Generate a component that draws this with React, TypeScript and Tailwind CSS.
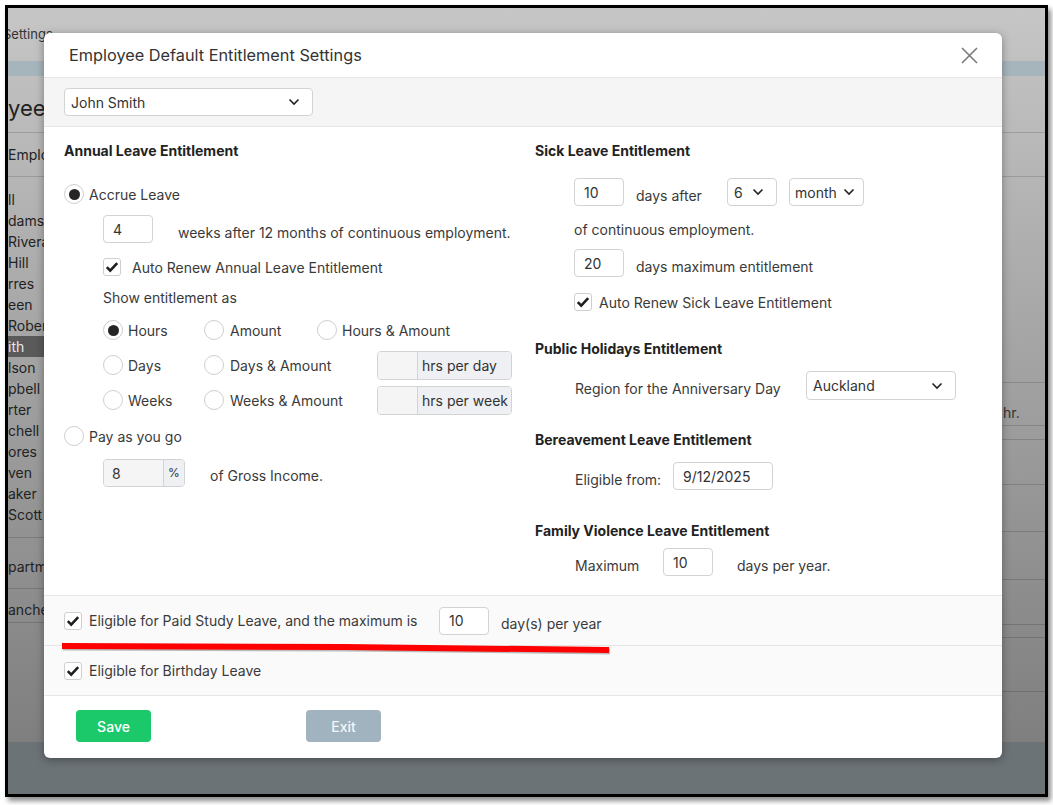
import React from 'react';

const Radio = ({ checked = false }: { checked?: boolean }) => (
  <div className="w-[20px] h-[20px] shrink-0 rounded-full border border-[#cfcfcf] bg-white flex items-center justify-center">
    {checked && <div className="w-[11px] h-[11px] rounded-full bg-[#252525]" />}
  </div>
);

const Checkbox = () => (
  <div className="w-[18px] h-[18px] shrink-0 rounded-[3px] border border-[#cfcfcf] bg-white flex items-center justify-center">
    <svg width="14" height="14" viewBox="0 0 14 14">
      <path d="M1.8 7.2l3.4 3.4 7-7.4" fill="none" stroke="#1f1f1f" strokeWidth="2.6" />
    </svg>
  </div>
);

const Chevron = () => (
  <svg width="12" height="8" viewBox="0 0 12 8" className="shrink-0">
    <path d="M1.5 1.5l4.5 4.5 4.5-4.5" fill="none" stroke="#222" strokeWidth="1.6" />
  </svg>
);

const Input = ({ value = '', w }: { value?: string; w: string }) => (
  <div className={`${w} h-[28px] shrink-0 border border-[#d3d3d3] rounded-[4px] bg-white px-[9px] flex items-center text-[#333]`}>
    {value}
  </div>
);

const Select = ({ value, w, h = 'h-[28px]' }: { value: string; w: string; h?: string }) => (
  <div className={`${w} ${h} shrink-0 border border-[#d3d3d3] rounded-[4px] bg-white pl-[6px] pr-[12px] flex items-center justify-between text-[#333]`}>
    <span>{value}</span>
    <Chevron />
  </div>
);

const Addon = ({ unit }: { unit: string }) => (
  <div className="flex h-[29px] border border-[#d3d3d3] rounded-[4px] overflow-hidden text-[#333]">
    <div className="w-[39px] bg-[#f5f5f5]" />
    <div className="w-[94px] bg-[#eef0f3] border-l border-[#d3d3d3] pl-[4px] flex items-center whitespace-nowrap">{unit}</div>
  </div>
);

const names = ['ll', 'dams', 'Rivera', 'Hill', 'rres', 'een', 'Robert', 'ith', 'lson', 'pbell', 'rter', 'chell', 'ores', 'ven', 'aker', 'Scott'];

const Backdrop = () => (
  <div className="h-full flex flex-col text-[14px] text-[#222]">
    <div className="h-[734px] flex flex-col bg-gradient-to-b from-[#c6c6c6] to-[#7f7f7f]">
      <div className="h-[53px] pt-[17px] -ml-[5px] text-[13px] text-[#333]">Settings</div>
      <div className="h-[15px] bg-[#a6b5bc]" />
      <div className="h-[57px] border-b border-black/15 flex items-center text-[22px] pt-[8px]">yee</div>
      <div className="h-[44px] border-b border-black/15 flex items-center">
        <div className="w-[36px] overflow-hidden whitespace-nowrap">Employees</div>
      </div>
      <div className="flex flex-1">
        <div className="w-[36px] flex flex-col pt-[12px] overflow-hidden">
          {names.map((n, i) => (
            <div key={i} className={`h-[21px] leading-[21px] whitespace-nowrap ${i === 7 ? 'bg-[#5a5a5a] text-[#e8e8e8]' : ''}`}>
              {n}
            </div>
          ))}
          <div className="mt-[12px] h-[52px] border-t border-b border-black/15 flex items-center whitespace-nowrap pt-[6px]">partments</div>
          <div className="h-[34px] border-b border-black/15 flex items-center whitespace-nowrap pt-[8px]">anches</div>
        </div>
        <div className="flex-1" />
        <div className="w-[43px] flex flex-col">
          <div className="h-[206px] border-b border-black/15" />
          <div className="h-[43px] border-b border-black/15 flex items-end pb-[2px] pl-[1px] text-[#333]">hr.</div>
          <div className="h-[14px] border-b border-black/15" />
          <div className="h-[45px] border-b border-black/15" />
          <div className="h-[47px] border-b border-black/15" />
          <div className="h-[48px] border-b border-black/15" />
          <div className="h-[45px] border-b border-black/15" />
          <div className="h-[13px] border-b border-black/15" />
          <div className="h-[54px] border-b border-black/15" />
        </div>
      </div>
    </div>
    <div className="flex-1 bg-[#6c7377]" />
  </div>
);

const Modal = () => (
  <div className="absolute left-[36px] top-[25px] w-[958px] h-[725px] bg-white rounded-[6px] shadow-[0_2px_8px_rgba(0,0,0,0.35)] overflow-hidden flex flex-col text-[14px] text-[#3a3a3a]">
    {/* header */}
    <div className="h-[45px] shrink-0 border-b border-[#e6e6e6] pl-[25px] pr-[24px] flex items-center justify-between">
      <span className="text-[16.3px] text-[#333]">Employee Default Entitlement Settings</span>
      <svg width="17" height="17" viewBox="0 0 17 17">
        <path d="M1 1l15 15M16 1L1 16" stroke="#7a7a7a" strokeWidth="1.6" />
      </svg>
    </div>
    <div className="h-[49px] shrink-0 bg-[#f5f5f5] border-b border-[#e6e6e6] px-[20px] flex items-center">
      <Select value="John Smith" w="w-[249px]" h="h-[28px]" />
    </div>

    {/* body */}
    <div className="h-[469px] shrink-0 border-b border-[#e6e6e6] pl-[20px] pt-[14px] flex">
      <div className="w-[471px] flex flex-col">
        <div className="h-[20px] leading-[20px] font-bold text-[#222]">Annual Leave Entitlement</div>
        <div className="mt-[23px] h-[20px] flex items-center">
          <Radio checked />
          <span className="ml-[5px]">Accrue Leave</span>
        </div>
        <div className="mt-[11px] ml-[39px] flex items-start">
          <Input value="4" w="w-[50px]" />
          <span className="ml-[25px] pt-[8px] leading-[20px]">weeks after 12 months of continuous employment.</span>
        </div>
        <div className="mt-[15px] ml-[39px] h-[18px] flex items-center">
          <Checkbox />
          <span className="ml-[11px]">Auto Renew Annual Leave Entitlement</span>
        </div>
        <div className="mt-[12px] ml-[39px] h-[20px] leading-[20px]">Show entitlement as</div>
        <div className="mt-[7px] ml-[39px] flex flex-col gap-[5px]">
          <div className="h-[30px] flex items-center">
            <div className="w-[101px] flex items-center"><Radio checked /><span className="ml-[5px]">Hours</span></div>
            <div className="w-[113px] flex items-center"><Radio /><span className="ml-[6px]">Amount</span></div>
            <div className="flex items-center"><Radio /><span className="ml-[5px]">Hours &amp; Amount</span></div>
          </div>
          <div className="h-[30px] flex items-center">
            <div className="w-[101px] flex items-center"><Radio /><span className="ml-[5px]">Days</span></div>
            <div className="w-[173px] flex items-center"><Radio /><span className="ml-[6px]">Days &amp; Amount</span></div>
            <Addon unit="hrs per day" />
          </div>
          <div className="h-[30px] flex items-center">
            <div className="w-[101px] flex items-center"><Radio /><span className="ml-[5px]">Weeks</span></div>
            <div className="w-[173px] flex items-center"><Radio /><span className="ml-[6px]">Weeks &amp; Amount</span></div>
            <Addon unit="hrs per week" />
          </div>
        </div>
        <div className="mt-[11px] h-[20px] flex items-center">
          <Radio />
          <span className="ml-[5px]">Pay as you go</span>
        </div>
        <div className="mt-[13px] ml-[39px] flex items-start">
          <div className="flex h-[28px] border border-[#d3d3d3] rounded-[4px] overflow-hidden text-[#333]">
            <div className="w-[59px] bg-[#f5f5f5] px-[8px] flex items-center">8</div>
            <div className="w-[21px] bg-[#eef0f3] border-l border-[#d3d3d3] flex items-center justify-center text-[12px]">%</div>
          </div>
          <span className="ml-[25px] pt-[7px] leading-[20px]">of Gross Income.</span>
        </div>
      </div>

      <div className="flex flex-col">
        <div className="h-[20px] leading-[20px] font-bold text-[#222]">Sick Leave Entitlement</div>
        <div className="mt-[17px] ml-[39px] flex items-start">
          <Input value="10" w="w-[50px]" />
          <span className="ml-[12px] w-[91px] pt-[8px] leading-[20px]">days after</span>
          <Select value="6" w="w-[50px]" />
          <div className="ml-[12px]">
            <div className="w-[75px] h-[28px] border border-[#d3d3d3] rounded-[4px] bg-white pl-[5px] pr-[8px] flex items-center justify-between text-[#333]">
              <span>month</span>
              <Chevron />
            </div>
          </div>
        </div>
        <div className="mt-[14px] ml-[39px] h-[20px] leading-[20px]">of continuous employment.</div>
        <div className="mt-[9px] ml-[39px] flex items-start">
          <Input value="20" w="w-[50px]" />
          <span className="ml-[12px] pt-[8px] leading-[20px]">days maximum entitlement</span>
        </div>
        <div className="mt-[16px] ml-[39px] h-[18px] flex items-center">
          <Checkbox />
          <span className="ml-[7px]">Auto Renew Sick Leave Entitlement</span>
        </div>
        <div className="mt-[28px] h-[20px] leading-[20px] font-bold text-[#222]">Public Holidays Entitlement</div>
        <div className="mt-[12px] ml-[40px] flex items-start">
          <span className="w-[231px] pt-[8px] leading-[20px]">Region for the Anniversary Day</span>
          <Select value="Auckland" w="w-[150px]" h="h-[29px]" />
        </div>
        <div className="mt-[30px] h-[20px] leading-[20px] font-bold text-[#222]">Bereavement Leave Entitlement</div>
        <div className="mt-[12px] ml-[40px] flex items-start">
          <span className="w-[98px] pt-[8px] leading-[20px]">Eligible from:</span>
          <Input value="9/12/2025" w="w-[100px]" />
        </div>
        <div className="mt-[31px] h-[20px] leading-[20px] font-bold text-[#222]">Family Violence Leave Entitlement</div>
        <div className="mt-[7px] ml-[40px] flex items-start">
          <span className="w-[88px] pt-[8px] leading-[20px]">Maximum</span>
          <Input value="10" w="w-[50px]" />
          <span className="ml-[24px] pt-[8px] leading-[20px]">days per year.</span>
        </div>
      </div>
    </div>

    {/* checkbox rows */}
    <div className="h-[50px] shrink-0 bg-[#fafafa] border-b border-[#e6e6e6] px-[20px] flex items-center">
      <Checkbox />
      <span className="ml-[7px] w-[350px]">Eligible for Paid Study Leave, and the maximum is</span>
      <Input value="10" w="w-[50px]" />
      <span className="ml-[12px] mt-[6px]">day(s) per year</span>
    </div>
    <div className="h-[50px] shrink-0 bg-[#fafafa] border-b border-[#e6e6e6] px-[20px] flex items-center">
      <Checkbox />
      <span className="ml-[7px]">Eligible for Birthday Leave</span>
    </div>

    {/* footer */}
    <div className="flex-1 pl-[32px] pt-[14px] flex items-start">
      <button className="w-[75px] h-[32px] rounded-[4px] bg-[#1bc96b] text-white font-medium">Save</button>
      <button className="ml-[155px] w-[75px] h-[32px] rounded-[4px] bg-[#a0b3bf] text-[#f3f6f8] font-medium">Exit</button>
    </div>

    {/* red annotation underline */}
    <svg className="absolute left-0 top-0 pointer-events-none" width="958" height="725">
      <path d="M18 613 L300 614 L565 617" fill="none" stroke="rgba(0,0,0,0.25)" strokeWidth="6" transform="translate(1 1.5)" />
      <path d="M18 613 L300 614 L565 617" fill="none" stroke="#ff0000" strokeWidth="6" />
    </svg>
  </div>
);

export default function App() {
  return (
    <div className="w-[1053px] h-[805px] bg-white pt-[5px] pl-[5px] font-[Inter,'Liberation_Sans',sans-serif]">
      <div className="relative w-[1043px] h-[792px] border-[3px] border-black shadow-[3px_4px_5px_rgba(0,0,0,0.45)] overflow-hidden">
        <Backdrop />
        <Modal />
      </div>
    </div>
  );
}
